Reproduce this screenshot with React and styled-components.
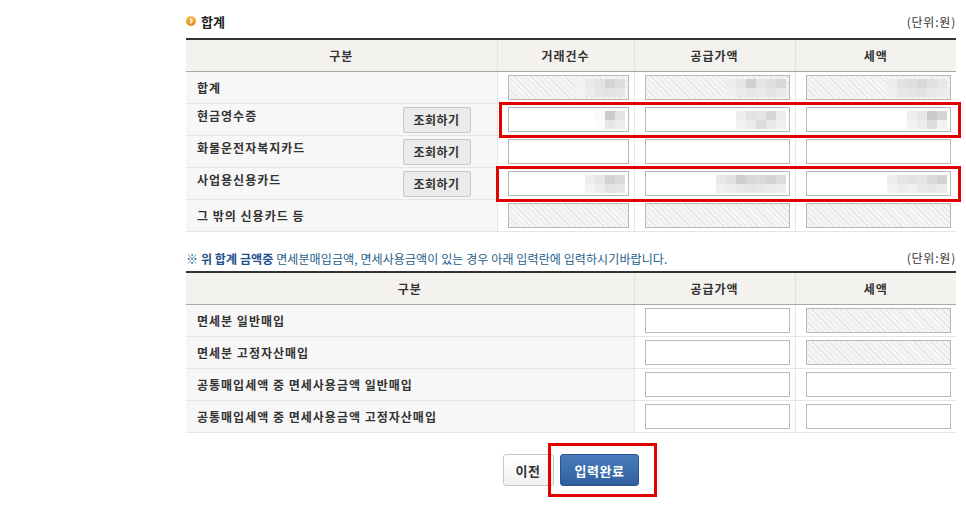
import React from "react";
import styled, { createGlobalStyle, css } from "styled-components";

const GlobalStyle = createGlobalStyle`
  body {
    margin: 0;
    background: #fff;
    font-family: "Noto Sans CJK KR", "Noto Sans", sans-serif;
    font-size: 12px;
    color: #333;
  }
`;

// blurred amounts, two rows of grey blocks, right aligned inside the field
const summaryRows = [
  {
    label: "합계",
    disabled: true,
    values: [
      [["#f1f1f1", "#e9e9e9", "#e4e4e4", "#d3d3d3", "#dddddd"], ["#f3f3f3", "#ececec", "#e6e6e6", "#e2e2e2", "#e6e6e6"]],
      [["#eeeeee", "#e6e6e6", "#d0d0d0", "#e4e4e4", "#dedede", "#d8d8d8"], ["#f0f0f0", "#ebebeb", "#e6e6e6", "#e9e9e9", "#e4e4e4", "#e8e8e8"]],
      [["#ececec", "#e2e2e2", "#dedede", "#d8d8d8", "#e0e0e0", "#e6e6e6"], ["#efefef", "#e8e8e8", "#e6e6e6", "#e2e2e2", "#e8e8e8", "#ececec"]],
    ],
  },
  {
    label: "현금영수증",
    lookup: true,
    values: [
      [["#fafafa", "#cccccc", "#e4e4e4"], ["#fbfbfb", "#e6e6e6", "#ececec"]],
      [["#eeeeee", "#e2e2e2", "#e6e6e6", "#d6d6d6", "#ececec"], ["#f2f2f2", "#ececec", "#dcdcdc", "#e8e8e8", "#efefef"]],
      [["#eeeeee", "#e8e8e8", "#c9c9c9", "#d4d4d4"], ["#f2f2f2", "#ececec", "#dcdcdc", "#f3f3f3"]],
    ],
  },
  { label: "화물운전자복지카드", lookup: true, values: [null, null, null] },
  {
    label: "사업용신용카드",
    lookup: true,
    values: [
      [["#eeeeee", "#e6e6e6", "#d2d2d2", "#dadada"], ["#f3f3f3", "#ececec", "#e2e2e2", "#e6e6e6"]],
      [["#e8e8e8", "#e2e2e2", "#cfcfcf", "#d8d8d8", "#dadada", "#d4d4d4", "#dcdcdc"], ["#efefef", "#ececec", "#e8e8e8", "#e6e6e6", "#e8e8e8", "#ebebeb", "#eeeeee"]],
      [["#eeeeee", "#e6e6e6", "#e2e2e2", "#e4e4e4", "#dadada", "#d2d2d2"], ["#f2f2f2", "#ececec", "#f0f0f0", "#e8e8e8", "#e6e6e6", "#eaeaea"]],
    ],
  },
  { label: "그 밖의 신용카드 등", disabled: true, values: [null, null, null] },
];

const exemptRows = [
  { label: "면세분 일반매입", taxDisabled: true },
  { label: "면세분 고정자산매입", taxDisabled: true },
  { label: "공통매입세액 중 면세사용금액 일반매입" },
  { label: "공통매입세액 중 면세사용금액 고정자산매입" },
];

const Page = styled.div`
  width: 770px;
  padding: 11px 10px 20px 186px;
`;

const TitleBar = styled.div`
  display: flex;
  justify-content: space-between;
  align-items: center;
  height: 20px;
  margin-bottom: 7px;
`;

const Title = styled.h3`
  display: flex;
  align-items: center;
  gap: 5px;
  margin: 0;
  font-size: 13px;
  font-weight: 700;
  color: #222;
`;

const Unit = styled.span`
  font-size: 12px;
  letter-spacing: 0.8px;
  color: #333;
`;

const TableWrap = styled.div`
  position: relative;
`;

const Table = styled.table`
  width: 770px;
  border-collapse: collapse;
  table-layout: fixed;
  border-top: 2px solid #333;
`;

const Th = styled.th`
  height: 31px;
  padding: 0;
  background: #f4f2ef;
  border-bottom: 1px solid #a8a8a8;
  border-left: 1px solid #e4e2df;
  font-size: 12px;
  font-weight: 700;
  letter-spacing: 1px;
  color: #333;
  text-align: center;
  &:first-child {
    border-left: none;
  }
`;

const Td = styled.td`
  height: 31px;
  padding: 0 5px 0 10px;
  border-bottom: 1px solid #e6e6e6;
  border-left: 1px solid #e6e6e6;
  background: #fff;
`;

const LabelCell = styled.td`
  height: 31px;
  padding: 0 26px 0 11px;
  border-bottom: 1px solid #e6e6e6;
  background: #f7f7f7;
`;

const LabelInner = styled.div`
  display: flex;
  justify-content: space-between;
  align-items: center;
`;

const Label = styled.span`
  font-size: 12px;
  font-weight: 700;
  letter-spacing: 1px;
  color: #333;
  padding-bottom: ${(p) => (p.$raised ? "8px" : "0")};
`;

const LookupButton = styled.button`
  width: 68px;
  height: 26px;
  padding: 0;
  border: 1px solid #c9c9c9;
  border-radius: 2px;
  background: #ebebeb;
  font-family: inherit;
  font-size: 12px;
  font-weight: 700;
  letter-spacing: 0.5px;
  color: #333;
  cursor: pointer;
`;

const Field = styled.div`
  display: flex;
  justify-content: flex-end;
  align-items: flex-start;
  box-sizing: border-box;
  width: 100%;
  height: 25px;
  padding: 3px 3px 0 0;
  border: 1px solid #b8b8b8;
  background: #fff;
  ${(p) =>
    p.$disabled &&
    css`
      background: repeating-linear-gradient(
        45deg,
        #f5f5f5 0 3px,
        #e5e5e5 3px 4px
      );
    `}
`;

const Mosaic = styled.div`
  display: grid;
  grid-template-columns: repeat(${(p) => p.$cols}, 10px);
  grid-auto-rows: 9px;
`;

const Block = styled.span`
  background: ${(p) => p.$c};
`;

const Highlight = styled.div`
  position: absolute;
  border: 3px solid #e00000;
  pointer-events: none;
`;

const Note = styled.div`
  display: flex;
  justify-content: space-between;
  align-items: center;
  height: 16px;
  margin: 17px 0 6px;
  font-size: 12px;
  color: #23608a;
`;

const NoteText = styled.p`
  margin: 0;
  padding-top: 3px;
  letter-spacing: 0.1px;
  b {
    color: #1e4f8e;
  }
`;

const Actions = styled.div`
  position: relative;
  display: flex;
  justify-content: center;
  gap: 6px;
  margin-top: 21px;
`;

const ActionButton = styled.button`
  height: 32px;
  padding: 0 ${(p) => (p.$primary ? "14px" : "12px")};
  border-radius: 3px;
  font-family: inherit;
  font-size: 13px;
  font-weight: 700;
  letter-spacing: 0.5px;
  cursor: pointer;
  ${(p) =>
    p.$primary
      ? css`
          border: 1px solid #2a5590;
          background: linear-gradient(#4a7cbd, #2f5f9f);
          color: #fff;
        `
      : css`
          border: 1px solid #c6c6c6;
          background: linear-gradient(#fff, #f1f1f1);
          color: #333;
        `}
`;

const ButtonHighlight = styled(Highlight)`
  left: 362px;
  top: -11px;
  width: 103px;
  height: 48px;
`;

const TitleIcon = () => (
  <svg width="10" height="10" viewBox="0 0 10 10">
    <defs>
      <linearGradient id="ti" x1="0" y1="0" x2="0" y2="1">
        <stop offset="0" stopColor="#f8c15a" />
        <stop offset="1" stopColor="#e0860e" />
      </linearGradient>
    </defs>
    <circle cx="5" cy="5" r="5" fill="url(#ti)" />
    <path d="M4 2.8 L6.2 5 L4 7.2" fill="none" stroke="#fff" strokeWidth="1.4" />
  </svg>
);

const Blurred = ({ rows }) => (
  <Mosaic $cols={rows[0].length}>
    {rows.flat().map((c, i) => (
      <Block key={i} $c={c} />
    ))}
  </Mosaic>
);

const App = () => {
  return (
    <Page>
      <GlobalStyle />
      <TitleBar>
        <Title>
          <TitleIcon />
          합계
        </Title>
        <Unit>(단위:원)</Unit>
      </TitleBar>

      <TableWrap>
        <Table>
          <colgroup>
            <col style={{ width: 311 }} />
            <col style={{ width: 137 }} />
            <col style={{ width: 161 }} />
            <col style={{ width: 161 }} />
          </colgroup>
          <thead>
            <tr>
              <Th>구분</Th>
              <Th>거래건수</Th>
              <Th>공급가액</Th>
              <Th>세액</Th>
            </tr>
          </thead>
          <tbody>
            {summaryRows.map((row) => (
              <tr key={row.label}>
                <LabelCell>
                  <LabelInner>
                    <Label $raised={row.lookup}>{row.label}</Label>
                    {row.lookup && <LookupButton type="button">조회하기</LookupButton>}
                  </LabelInner>
                </LabelCell>
                {row.values.map((v, i) => (
                  <Td key={i}>
                    <Field $disabled={row.disabled}>{v && <Blurred rows={v} />}</Field>
                  </Td>
                ))}
              </tr>
            ))}
          </tbody>
        </Table>
        <Highlight style={{ left: 313, top: 64, width: 456, height: 30 }} />
        <Highlight style={{ left: 310, top: 128, width: 459, height: 30 }} />
      </TableWrap>

      <Note>
        <NoteText>
          ※ <b>위 합계 금액중</b> 면세분매입금액, 면세사용금액이 있는 경우 아래 입력란에 입력하시기바랍니다.
        </NoteText>
        <Unit>(단위:원)</Unit>
      </Note>

      <Table>
        <colgroup>
          <col style={{ width: 448 }} />
          <col style={{ width: 161 }} />
          <col style={{ width: 161 }} />
        </colgroup>
        <thead>
          <tr>
            <Th>구분</Th>
            <Th>공급가액</Th>
            <Th>세액</Th>
          </tr>
        </thead>
        <tbody>
          {exemptRows.map((row) => (
            <tr key={row.label}>
              <LabelCell>
                <Label>{row.label}</Label>
              </LabelCell>
              <Td>
                <Field />
              </Td>
              <Td>
                <Field $disabled={row.taxDisabled} />
              </Td>
            </tr>
          ))}
        </tbody>
      </Table>

      <Actions>
        <ActionButton type="button">이전</ActionButton>
        <ActionButton type="button" $primary>
          입력완료
        </ActionButton>
        <ButtonHighlight />
      </Actions>
    </Page>
  );
};

export default App;
